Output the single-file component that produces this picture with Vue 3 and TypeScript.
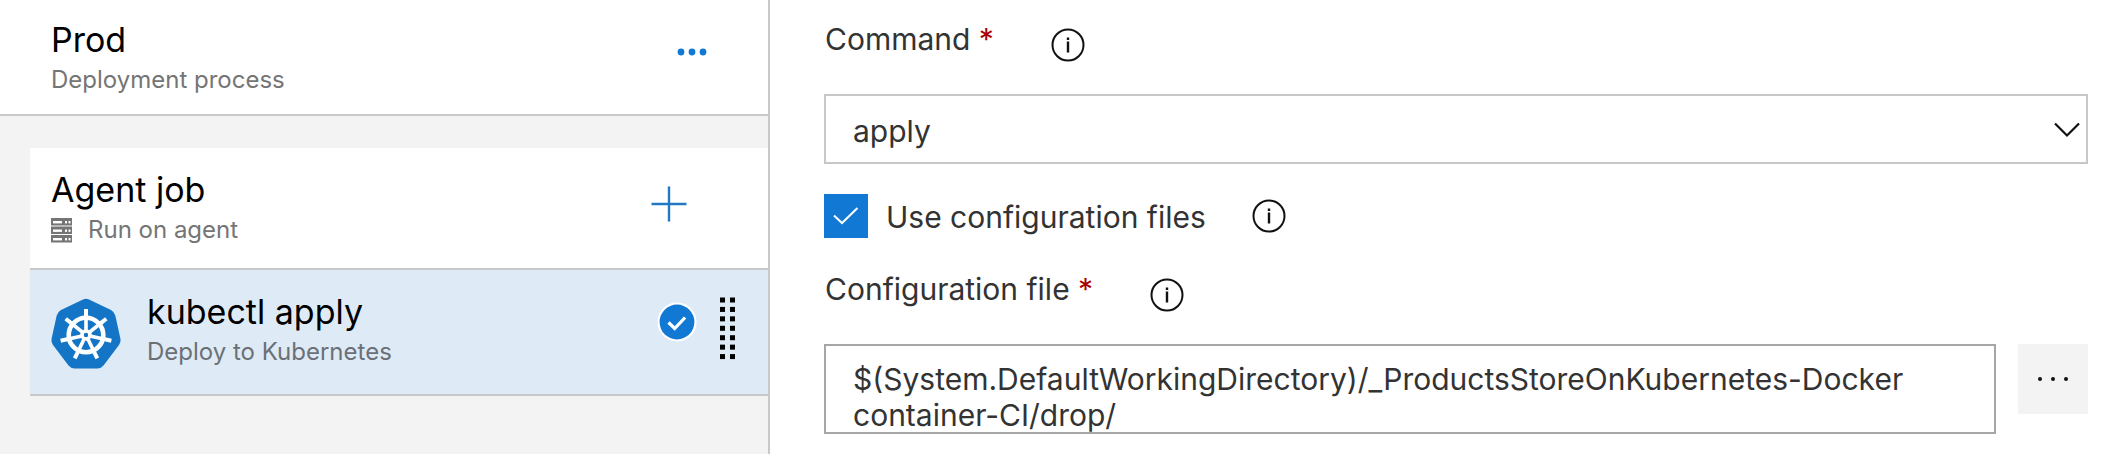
<script setup lang="ts">
import { ref } from 'vue'

const commands = ['apply', 'create', 'delete', 'get', 'set']
const command = ref('apply')
const useConfigFiles = ref(true)
const configFile = ref(
  '$(System.DefaultWorkingDirectory)/_ProductsStoreOnKubernetes-Docker container-CI/drop/'
)

const gripRows = [0, 1, 2, 3, 4, 5, 6]
const rackRows = [0, 1, 2]
const spokes = Array.from({ length: 7 }, (_, i) => (i * 360) / 7)
</script>

<template>
  <div class="page">
    <aside class="process">
      <header class="stage">
        <div class="text">
          <h1 class="title">Prod</h1>
          <p class="subtitle">Deployment process</p>
        </div>
        <button class="icon-button more" type="button" aria-label="More actions">
          <svg width="30" height="8" viewBox="0 0 30 8" fill="#1179d4">
            <circle cx="4" cy="4" r="3.4" />
            <circle cx="15" cy="4" r="3.4" />
            <circle cx="26" cy="4" r="3.4" />
          </svg>
        </button>
      </header>

      <section class="job">
        <div class="job-head">
          <div class="text">
            <h2 class="title">Agent job</h2>
            <p class="subtitle with-icon">
              <svg width="21" height="25" viewBox="0 0 21 25" aria-hidden="true">
                <g v-for="r in rackRows" :key="r" :transform="`translate(0 ${r * 8.5})`">
                  <rect width="21" height="7.500" fill="#757575" />
                  <rect x="2" y="3" width="9" height="2.400" fill="#fff" />
                  <rect x="14" y="3" width="2" height="2.400" fill="#fff" />
                  <rect x="17.500" y="3" width="2" height="2.400" fill="#fff" />
                </g>
              </svg>
              <span>Run on agent</span>
            </p>
          </div>
          <button class="icon-button add" type="button" aria-label="Add a task">
            <svg width="36" height="36" viewBox="0 0 36 36" fill="none" stroke="#2378c4" stroke-width="2.4">
              <path d="M18 0.5v35M0.5 18h35" />
            </svg>
          </button>
        </div>

        <div class="task">
          <svg class="logo" width="70" height="72" viewBox="0 0 70 72" aria-hidden="true">
            <path
              d="M32 1.6Q35 0 38 1.6L60 12Q63.500 14 64.300 17.500L69.500 41Q70 44.500 68 47L52.500 67.500Q50 70.500 46.500 70.500H23.500Q20 70.500 17.500 67.500L2 47Q0 44.500 0.500 41L5.700 17.500Q6.500 14 10 12Z"
              fill="#1475c6"
            />
            <g transform="translate(35 37)" stroke="#fff" fill="none">
              <circle r="17.300" stroke-width="4.600" />
              <g v-for="a in spokes" :key="a" :transform="`rotate(${a})`">
                <path d="M0 -3V-18" stroke-width="3.600" />
                <path d="M0 -17V-26" stroke-width="4" />
              </g>
              <circle r="4" stroke-width="3.600" />
            </g>
          </svg>
          <div class="text">
            <h3 class="title">kubectl apply</h3>
            <p class="subtitle">Deploy to Kubernetes</p>
          </div>
          <svg class="status" width="40" height="40" viewBox="0 0 40 40" role="img" aria-label="Enabled">
            <circle cx="20" cy="20" r="19.500" fill="#fff" />
            <circle cx="20" cy="20" r="17.400" fill="#1179d4" />
            <path d="M11.500 20.500l6.200 6 10.400-11" fill="none" stroke="#fff" stroke-width="3.200" />
          </svg>
          <svg class="grip" width="15" height="63" viewBox="0 0 15 63" aria-hidden="true">
            <g v-for="r in gripRows" :key="r" :transform="`translate(0 ${r * 9.43})`">
              <rect width="5" height="5" y="0.500" />
              <rect x="10" width="5" height="5" y="0.500" />
            </g>
          </svg>
        </div>
      </section>
    </aside>

    <main class="form">
      <div class="label-row">
        <label for="command">Command <span class="required">*</span></label>
        <button class="icon-button info" type="button" aria-label="About command">
          <svg width="34" height="34" viewBox="0 0 34 34">
            <circle cx="17" cy="17" r="15.500" fill="none" stroke="#111" stroke-width="2" />
            <path d="M17 13.500v11M17 9.500v2.500" stroke="#111" stroke-width="2.400" />
          </svg>
        </button>
      </div>
      <div class="select-box">
        <select id="command" v-model="command">
          <option v-for="c in commands" :key="c" :value="c">{{ c }}</option>
        </select>
        <svg class="chevron" width="26" height="16" viewBox="0 0 26 16" fill="none" stroke="#111" stroke-width="2.200" aria-hidden="true">
          <path d="M1 1.500l12 12 12-12" />
        </svg>
      </div>

      <div class="check-row">
        <span class="check-box">
          <input id="use-config" v-model="useConfigFiles" type="checkbox" />
          <svg v-if="useConfigFiles" class="tick" width="26" height="18" viewBox="0 0 26 18" fill="none" stroke="#fff" stroke-width="2" aria-hidden="true">
            <path d="M1 8.500l8 7.500L24.500 1" />
          </svg>
        </span>
        <label for="use-config">Use configuration files</label>
        <button class="icon-button info" type="button" aria-label="About configuration files">
          <svg width="34" height="34" viewBox="0 0 34 34">
            <circle cx="17" cy="17" r="15.500" fill="none" stroke="#111" stroke-width="2" />
            <path d="M17 13.500v11M17 9.500v2.500" stroke="#111" stroke-width="2.400" />
          </svg>
        </button>
      </div>

      <div class="label-row">
        <label for="config-file">Configuration file <span class="required">*</span></label>
        <button class="icon-button info" type="button" aria-label="About configuration file">
          <svg width="34" height="34" viewBox="0 0 34 34">
            <circle cx="17" cy="17" r="15.500" fill="none" stroke="#111" stroke-width="2" />
            <path d="M17 13.500v11M17 9.500v2.500" stroke="#111" stroke-width="2.400" />
          </svg>
        </button>
      </div>
      <div class="file-row">
        <textarea id="config-file" v-model="configFile" rows="2" spellcheck="false"></textarea>
        <button class="browse" type="button" aria-label="Browse">
          <svg width="32" height="6" viewBox="0 0 32 6" fill="#111">
            <circle cx="3" cy="3" r="2" />
            <circle cx="16" cy="3" r="2" />
            <circle cx="29" cy="3" r="2" />
          </svg>
        </button>
      </div>
    </main>
  </div>
</template>

<style>
body {
  margin: 0;
}
</style>

<style scoped>
.page {
  display: flex;
  min-height: 100vh;
  background: #fff;
  color: #333;
  font-family: Inter, "Liberation Sans", sans-serif;
  font-size: 30px;
}

.process {
  flex: 0 0 770px;
  box-sizing: border-box;
  border-right: 2px solid #c8c8c8;
  background: #f3f3f3;
}

.text {
  flex: 1;
}

.title {
  margin: 0;
  color: #000;
  font-size: 34px;
  font-weight: 400;
  line-height: 40px;
}

.subtitle {
  margin: 0;
  color: #757575;
  font-size: 24px;
  line-height: 40px;
}

.with-icon {
  display: flex;
  align-items: center;
  gap: 16px;
}

.icon-button {
  display: flex;
  margin: 0;
  padding: 0;
  border: 0;
  background: none;
  cursor: pointer;
}

.stage {
  display: flex;
  align-items: flex-start;
  padding: 20px 61px 14px 51px;
  border-bottom: 2px solid #c8c8c8;
  background: #fff;
}

.more {
  padding: 28px 0;
}

.job {
  margin: 32px 0 0 30px;
}

.job-head,
.task {
  display: flex;
  align-items: flex-start;
  border-bottom: 2px solid #c8c8c8;
}

.job-head {
  padding: 22px 81px 18px 21px;
  background: #fff;
}

.add {
  padding: 16px 0;
}

.task {
  padding: 22px 33px 22px 21px;
  background: #deebf7;
}

.task .subtitle {
  color: #6b7076;
}

.logo {
  margin: 6px 26px 0 0;
}

.status {
  margin: 10px 23px 0 0;
}

.grip {
  margin-top: 5px;
}

.form {
  flex: 1;
  min-width: 0;
  padding: 18px 26px 20px 54px;
}

.label-row {
  display: flex;
  align-items: flex-start;
  gap: 57px;
  height: 76px;
  padding-left: 1px;
}

.label-row label {
  line-height: 42px;
}

.label-row .info {
  margin-top: 10px;
}

.required {
  color: #a80000;
}

.select-box {
  position: relative;
}

select {
  display: block;
  box-sizing: border-box;
  width: 100%;
  height: 70px;
  margin: 0;
  padding: 4px 60px 0 27px;
  border: 2px solid #c8c8c8;
  border-radius: 0;
  background: #fff;
  color: inherit;
  font: inherit;
  appearance: none;
}

.chevron {
  position: absolute;
  top: 28px;
  right: 8px;
  pointer-events: none;
}

.check-row {
  display: flex;
  align-items: center;
  margin: 30px 0;
}

.check-box {
  display: grid;
  place-items: center;
  margin-right: 18px;
}

.check-box > * {
  grid-area: 1 / 1;
}

.check-box input {
  width: 44px;
  height: 44px;
  margin: 0;
  border: 2px solid #1179d4;
  appearance: none;
}

.check-box input:checked {
  background: #1179d4;
}

.tick {
  pointer-events: none;
}

.check-row label {
  margin-right: 46px;
  padding-top: 2px;
  line-height: 42px;
}

.file-row {
  display: flex;
  align-items: flex-start;
  gap: 22px;
}

textarea {
  display: block;
  flex: 1;
  box-sizing: border-box;
  min-width: 0;
  height: 90px;
  margin: 0;
  padding: 15px 27px 0;
  border: 2px solid #a6a6a6;
  border-radius: 0;
  background: #fff;
  color: inherit;
  font: inherit;
  line-height: 36px;
  overflow: hidden;
  resize: none;
}

.browse {
  display: grid;
  place-items: center;
  width: 70px;
  height: 70px;
  padding: 0;
  border: 0;
  background: #f3f3f3;
  cursor: pointer;
}
</style>
